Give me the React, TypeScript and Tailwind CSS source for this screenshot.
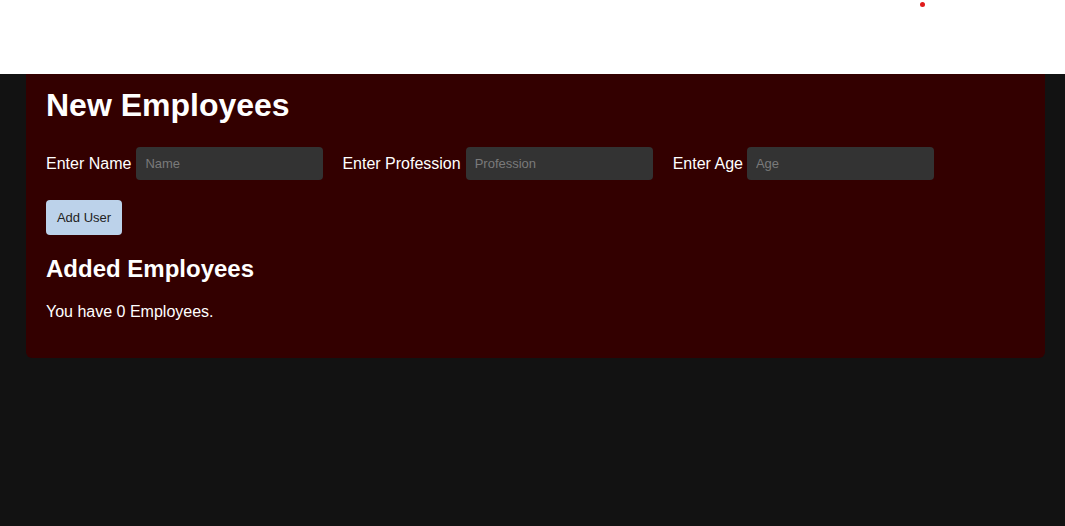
import React from "react";

export default function App() {
  const font = { fontFamily: '"Liberation Sans", Arial, sans-serif' };
  return (
    <div className="min-h-[526px] bg-[#121212]" style={font}>
      <div className="relative h-[74px] bg-white">
        <span className="absolute left-[920px] top-[2px] h-[5px] w-[5px] rounded-full bg-[#e01b1b]" />
      </div>
      <div className="px-[26px] pr-[20px]">
        <div className="rounded-b-[6px] bg-[#330000] px-[20px] pt-[13px] pb-[37px] text-white">
          <h1 className="text-[32px] font-bold leading-[37px]">New Employees</h1>
          <div className="mt-[23px] flex items-center">
            <label className="text-[16px]">Enter Name</label>
            <input
              placeholder="Name"
              className="ml-[5px] h-[33px] w-[187px] rounded-[4px] bg-[#333333] px-[9px] text-[13px] text-white placeholder:text-[#7a7a7a] outline-none"
              style={font}
            />
            <label className="ml-[19px] text-[16px]">Enter Profession</label>
            <input
              placeholder="Profession"
              className="ml-[5px] h-[33px] w-[187px] rounded-[4px] bg-[#333333] px-[9px] text-[13px] text-white placeholder:text-[#7a7a7a] outline-none"
              style={font}
            />
            <label className="ml-[20px] text-[16px]">Enter Age</label>
            <input
              placeholder="Age"
              className="ml-[4px] h-[33px] w-[187px] rounded-[4px] bg-[#333333] px-[9px] text-[13px] text-white placeholder:text-[#7a7a7a] outline-none"
              style={font}
            />
          </div>
          <button
            className="mt-[20px] block h-[35px] w-[76px] rounded-[4px] bg-[#bcd2ea] text-[13px] text-[#222]"
            style={font}
          >
            Add User
          </button>
          <h2 className="mt-[20px] text-[24px] font-bold leading-[28px]">Added Employees</h2>
          <p className="mt-[19px] text-[16px] leading-[19px]">You have 0 Employees.</p>
        </div>
      </div>
    </div>
  );
}
